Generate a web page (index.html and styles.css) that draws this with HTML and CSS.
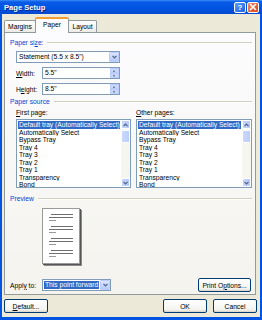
FILE: index.html
```html
<!DOCTYPE html>
<html lang="en">
<head>
	<meta charset="UTF-8">
	<title>Page Setup</title>
	<link rel="stylesheet" href="styles.css">
</head>
<body>

<div class="window">
	<div class="titlebar">
		<span class="title">Page Setup</span>
		<span class="tbtn help">?</span>
		<span class="tbtn close">
			<svg width="8" height="8" viewBox="0 0 8 8"><path d="M1 1L7 7M7 1L1 7" stroke="#fff" stroke-width="1.6"/></svg>
		</span>
	</div>

	<div class="client">
		<div class="tabs">
			<span class="tab t-margins">Margins</span>
			<span class="tab t-paper active">Paper</span>
			<span class="tab t-layout">Layout</span>
		</div>

		<div class="panel">
			<div class="group"><span>Paper si<u>z</u>e:</span></div>
			<div class="select size">
				<span class="val">Statement (5.5 x 8.5")</span>
				<span class="drop"><svg width="5" height="4" viewBox="0 0 5 4"><path d="M0.5 0.8L2.5 2.8L4.5 0.8" fill="none" stroke="#4d6185" stroke-width="1.2"/></svg></span>
			</div>
			<div class="row dim">
				<span class="lbl"><u>W</u>idth:</span>
				<div class="spin"><span class="val">5.5"</span><span class="spinbtn"><i class="up"></i><i class="down"></i></span></div>
			</div>
			<div class="row dim">
				<span class="lbl">H<u>e</u>ight:</span>
				<div class="spin"><span class="val">8.5"</span><span class="spinbtn"><i class="up"></i><i class="down"></i></span></div>
			</div>

			<div class="group src"><span>Paper source</span></div>
			<div class="cols">
				<div class="col first">
					<span class="lbl"><u>F</u>irst page:</span>
					<div class="list">
						<ul>
							<li class="sel">Default tray (Automatically Select)</li>
							<li>Automatically Select</li>
							<li>Bypass Tray</li>
							<li>Tray 4</li>
							<li>Tray 3</li>
							<li>Tray 2</li>
							<li>Tray 1</li>
							<li>Transparency</li>
							<li>Bond</li>
						</ul>
						<div class="sb">
							<span class="sbtn"><svg width="5" height="4" viewBox="0 0 5 4"><path d="M0.5 3.2L2.5 1.2L4.5 3.2" fill="none" stroke="#4d6185" stroke-width="1.2"/></svg></span>
							<span class="thumb"></span>
							<span class="track"></span>
							<span class="sbtn"><svg width="5" height="4" viewBox="0 0 5 4"><path d="M0.5 0.8L2.5 2.8L4.5 0.8" fill="none" stroke="#4d6185" stroke-width="1.2"/></svg></span>
						</div>
					</div>
				</div>
				<div class="col other">
					<span class="lbl"><u>O</u>ther pages:</span>
					<div class="list">
						<ul>
							<li class="sel">Default tray (Automatically Select)</li>
							<li>Automatically Select</li>
							<li>Bypass Tray</li>
							<li>Tray 4</li>
							<li>Tray 3</li>
							<li>Tray 2</li>
							<li>Tray 1</li>
							<li>Transparency</li>
							<li>Bond</li>
						</ul>
						<div class="sb">
							<span class="sbtn"><svg width="5" height="4" viewBox="0 0 5 4"><path d="M0.5 3.2L2.5 1.2L4.5 3.2" fill="none" stroke="#4d6185" stroke-width="1.2"/></svg></span>
							<span class="thumb"></span>
							<span class="track"></span>
							<span class="sbtn"><svg width="5" height="4" viewBox="0 0 5 4"><path d="M0.5 0.8L2.5 2.8L4.5 0.8" fill="none" stroke="#4d6185" stroke-width="1.2"/></svg></span>
						</div>
					</div>
				</div>
			</div>

			<div class="group prev"><span>Preview</span></div>
			<div class="page">
				<svg width="38" height="56" viewBox="0 0 38 56">
					<g stroke-width="1">
						<path d="M9 6.5H31M7 9.5H31" stroke="#6f6f6f"/>
						<path d="M7 12.5H14" stroke="#9a9a9a"/>
						<path d="M9 18.5H31M7 21.5H31" stroke="#6f6f6f"/>
						<path d="M7 24.5H14" stroke="#9a9a9a"/>
						<path d="M9 30.5H31M7 33.5H31" stroke="#6f6f6f"/>
						<path d="M7 36.5H14" stroke="#9a9a9a"/>
						<path d="M9 42.5H31M7 45.5H31" stroke="#6f6f6f"/>
						<path d="M7 48.5H14" stroke="#9a9a9a"/>
					</g>
				</svg>
			</div>

			<div class="apply">
				<span class="lbl">Appl<u>y</u> to:</span>
				<div class="select applysel">
					<span class="val"><span class="hl">This point forward</span></span>
					<span class="drop"><svg width="5" height="4" viewBox="0 0 5 4"><path d="M0.5 0.8L2.5 2.8L4.5 0.8" fill="none" stroke="#4d6185" stroke-width="1.2"/></svg></span>
				</div>
				<button class="btn opts">Print O<u>p</u>tions...</button>
			</div>
		</div>

		<div class="footer">
			<button class="btn"><u>D</u>efault...</button>
			<button class="btn ok">OK</button>
			<button class="btn">Cancel</button>
		</div>
	</div>
</div>

</body>
</html>
```

FILE: styles.css
```css
*{
	margin: 0;
	padding: 0;
	box-sizing: border-box;
}
body{
	font-family: "Liberation Sans", Arial, sans-serif;
	font-size: 6.7px;
	color: #000;
}
u{
	text-decoration: underline;
	text-underline-offset: 1px;
}

.window{
	width: 262px;
	height: 320px;
	background: #0054e3;
	display: flex;
	flex-direction: column;
	padding-bottom: 3px;
}

/* title bar */
.titlebar{
	height: 14px;
	display: flex;
	align-items: center;
	gap: 1px;
	padding: 0 3px 0 4px;
	background: linear-gradient(#3b8cf5 0, #0a5ae6 2px, #0054e3 8px, #0048d0 14px);
}
.title{
	flex: 1;
	color: #fff;
	font-weight: bold;
	font-size: 7.6px;
	text-shadow: 1px 1px 0 #0f1f8a;
}
.tbtn{
	width: 12px;
	height: 11px;
	border: 1px solid #fff;
	border-radius: 2px;
	display: flex;
	align-items: center;
	justify-content: center;
	color: #fff;
	font-weight: bold;
	font-size: 8px;
}
.help{
	background: linear-gradient(135deg, #5a9bff, #1c5fe0);
}
.close{
	background: linear-gradient(135deg, #ec8a67, #d9441c);
}

/* client area */
.client{
	flex: 1;
	margin: 0 2px;
	background: #ece9d8;
	padding: 3px 4px 0 2px;
	display: flex;
	flex-direction: column;
}

.tabs{
	height: 15px;
	display: flex;
	align-items: flex-end;
	position: relative;
	z-index: 1;
}
.tab{
	height: 12px;
	line-height: 11px;
	text-align: center;
	border: 1px solid #919b9c;
	border-bottom: none;
	border-radius: 2px 2px 0 0;
	background: linear-gradient(#fefefe, #ecebe6);
}
.t-margins{ width: 32px; }
.t-paper{ width: 34px; }
.t-layout{ width: 29px; margin-left: -1px; }
.tab.active{
	height: 16px;
	margin-bottom: -1px;
	line-height: 12px;
	border-top: 2px solid #f1a02f;
	background: #fcfcfe;
	margin-left: -1px;
}

.panel{
	height: 263px;
	border: 1px solid #919b9c;
	background: linear-gradient(#fcfcfe, #f4f3ee);
	padding: 6px 3px 0 5px;
	display: flex;
	flex-direction: column;
}

.group{
	height: 8px;
	line-height: 8px;
	color: #0046d5;
	display: flex;
	align-items: center;
	gap: 4px;
}
.group::after{
	content: "";
	flex: 1;
	border-top: 1px solid #d0d0bf;
	border-bottom: 1px solid #fff;
}

.select{
	height: 12px;
	border: 1px solid #7f9db9;
	background: #fff;
	display: flex;
	align-items: stretch;
}
.select .val{
	flex: 1;
	line-height: 10px;
	padding-left: 2px;
	white-space: nowrap;
	overflow: hidden;
}
.drop{
	width: 10px;
	border: 1px solid #bccdf9;
	border-radius: 1px;
	background: linear-gradient(#dbe5fe, #b5c9f9);
	display: flex;
	align-items: center;
	justify-content: center;
}
.size{
	width: 104px;
	margin: 4px 0 0 6px;
}

.row{
	display: flex;
	align-items: center;
	margin: 4px 0 0 6px;
	height: 12px;
}
.row .lbl{
	width: 26px;
}
.spin{
	width: 78px;
	height: 12px;
	border: 1px solid #7f9db9;
	background: #fff;
	display: flex;
}
.spin .val{
	flex: 1;
	line-height: 10px;
	padding-left: 2px;
}
.spinbtn{
	width: 9px;
	display: flex;
	flex-direction: column;
}
.spinbtn i{
	flex: 1;
	border: 1px solid #bccdf9;
	background: #c8d7fb;
	position: relative;
}
.spinbtn i::after{
	content: "";
	position: absolute;
	left: 2px;
	top: 1px;
	border-left: 1.5px solid transparent;
	border-right: 1.5px solid transparent;
}
.spinbtn .up::after{
	border-bottom: 2px solid #4d6185;
}
.spinbtn .down::after{
	border-top: 2px solid #4d6185;
}

.src{
	margin-top: 3px;
}
.cols{
	display: flex;
	gap: 5px;
	margin: 3px 0 0 6px;
}
.col{
	display: flex;
	flex-direction: column;
}
.col .lbl{
	height: 8px;
	line-height: 8px;
}
.first{ width: 115px; }
.other{ width: 116px; }

.list{
	margin-top: 2px;
	height: 69px;
	border: 1px solid #7f9db9;
	background: #fff;
	display: flex;
}
.list ul{
	flex: 1;
	min-width: 0;
	list-style: none;
	padding: 1px 1px 0 1px;
	overflow: hidden;
}
.list li{
	height: 7.5px;
	line-height: 7.5px;
	padding-left: 1px;
	white-space: nowrap;
	overflow: hidden;
}
.list li.sel{
	background: #316ac5;
	color: #fff;
}
.sb{
	width: 9px;
	flex: none;
	display: flex;
	flex-direction: column;
	background: #f6f6f1;
}
.sbtn{
	height: 9px;
	border: 1px solid #fff;
	border-radius: 1px;
	background: linear-gradient(90deg, #c6d6fc, #b5c8f8);
	display: flex;
	align-items: center;
	justify-content: center;
}
.thumb{
	height: 13px;
	margin-top: 1px;
	border: 1px solid #fff;
	border-radius: 1px;
	background: linear-gradient(90deg, #cad9fc, #bbcdf9);
}
.track{
	flex: 1;
}

.prev{
	margin-top: 7px;
}
.page{
	width: 38px;
	height: 56px;
	margin: 5px 0 0 32px;
	background: #fff;
	border: 1px solid #9a9a9a;
	box-shadow: 1px 1px 0 #555, 2px 2px 0 #8a8a8a;
}
.page svg{
	display: block;
	margin: -1px;
}

.apply{
	display: flex;
	align-items: center;
	margin-top: 14px;
	height: 14px;
}
.apply .lbl{
	width: 32px;
}
.applysel{
	width: 69px;
}
.applysel .val{
	padding: 1px;
	line-height: 8px;
}
.hl{
	display: inline-block;
	background: #316ac5;
	color: #fff;
	padding: 0 1px;
	height: 8px;
}

.btn{
	font-family: inherit;
	font-size: 6.7px;
	height: 14px;
	width: 44px;
	border: 1px solid #003c74;
	border-radius: 2px;
	background: linear-gradient(#ffffff, #f3f3ef 80%, #d8d3c7);
	color: #000;
}
.opts{
	width: 53px;
	margin-left: auto;
	margin-right: 1px;
}

.footer{
	display: flex;
	margin-top: 4px;
	gap: 6px;
}
.footer .ok{
	margin-left: auto;
}
.footer .btn:last-child{
	margin-right: -1px;
}
```
